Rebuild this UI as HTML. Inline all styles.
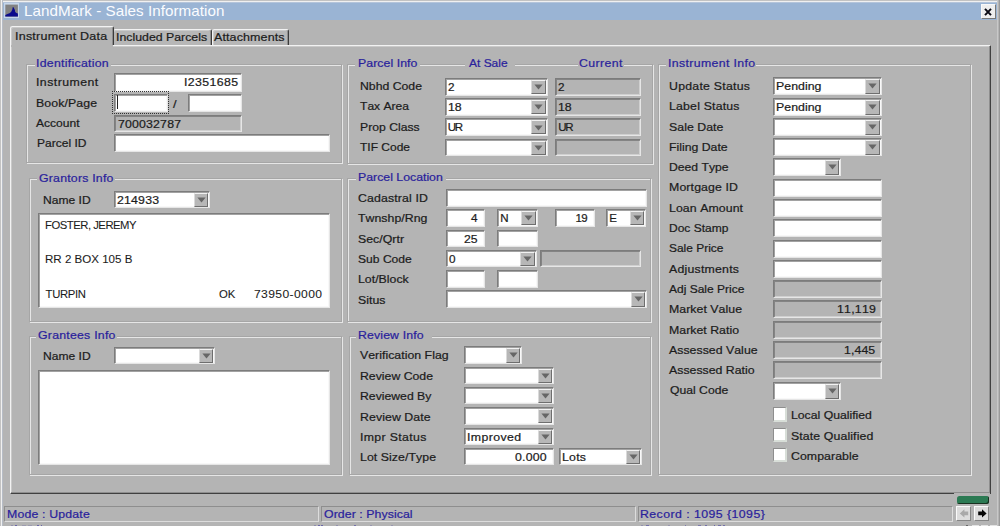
<!DOCTYPE html>
<html><head><meta charset="utf-8"><title>LandMark - Sales Information</title>
<style>
*{box-sizing:border-box;margin:0;padding:0}
html,body{width:1000px;height:526px;overflow:hidden;background:#b4b4b4}
body{position:relative;font-family:"Liberation Sans",sans-serif;font-size:12px}
#w{position:absolute;left:0;top:0;width:1000px;height:526px;overflow:hidden;background:#b4b4b4}
#bl{left:0;top:0;width:3px;height:526px;background:linear-gradient(90deg,#c2c2c2 0,#c2c2c2 1px,#f0f0f0 1px,#f0f0f0 2px,#b6bcc6 2px)}
#bt{left:0;top:0;width:998px;height:3px;background:linear-gradient(180deg,#c2c2c2 0,#c2c2c2 1px,#f0f0f0 1px,#f0f0f0 2px,#b4c4da 2px)}
#br{left:997px;top:0;width:3px;height:526px;background:linear-gradient(90deg,#c8c8c8 0,#c8c8c8 1px,#b4b4b4 1px,#b4b4b4 1.8px,#9a9a9a 1.8px)}
#w>*{position:absolute}
.t{font-kerning:none;-webkit-text-stroke:0.22px currentColor;transform-origin:0 0;white-space:pre;line-height:16px;height:16px;z-index:5}
#tb{left:3px;top:3px;width:994px;height:17px;background:#9ab4d4}
#ico{left:4px;top:3.2px}
#close{left:981px;top:4px;width:14.5px;height:14.5px;background:#eeeeee;border:1px solid;border-color:#f8f8f8 #787878 #787878 #f8f8f8}
#close svg{position:absolute;left:0.5px;top:2.6px}
#page{left:10px;top:45px;width:981px;height:449px;border:1px solid;border-color:#f2f2f2 #404040 #404040 #f2f2f2;
 box-shadow:inset -1px -1px 0 #8e8e8e,inset 1px 1px 0 rgba(255,255,255,.28)}
.tab{background:#b7b7b7;border:1px solid;border-color:#f2f2f2 #3c3c3c #b4b4b4 #f2f2f2;border-bottom:none;border-radius:2.5px 2.5px 0 0;box-shadow:inset 1px 1px 0 rgba(255,255,255,.28),inset -1px 0 0 rgba(90,90,90,.45)}
.tab.sel{z-index:2;background:#b4b4b4}
#tcov{left:11px;top:45px;width:101.5px;height:2px;background:#b4b4b4;z-index:3}
.g{border:1px solid #a6a6a6;box-shadow:inset 1px 1px 0 #e6e6e6, 1px 1px 0 #e6e6e6}
.gl{height:6px;background:#b4b4b4}
.f{background:#fff;border:1px solid;border-color:#7c7c7c #e6e6e6 #e6e6e6 #7c7c7c;box-shadow:inset 1px 1px 0 rgba(100,100,100,.6),inset -1px -1px 0 rgba(240,240,240,.45)}
.f.ro{background:#b4b4b4}
.cb{width:14.5px;background:#b7b7b7;border:1px solid;border-color:#f2f2f2 #6e6e6e #6e6e6e #dadada}
.cb svg{position:absolute;left:2.1px;top:3.4px}
.ck{width:14.5px;height:14.5px;background:#fff;border:solid;border-width:1.5px 2px 2px 1.5px;border-color:#8e8e8e #d8ded8 #d8ded8 #8e8e8e}
.tip{top:524.7px;height:2px;background:#3a34a0}
.sp{border:1px solid;border-color:#8e8e8e #dcdcdc #dcdcdc #8e8e8e}
#focus{left:112px;top:91px;width:57px;height:23px;border:1px dotted #333}
#caret{left:117px;top:95px;width:1px;height:14px;background:#222}
#green{left:957px;top:496px;width:32px;height:8px;background:#2b7a53;border-radius:2.5px;box-shadow:inset -1px -1px 0 #17301f}
#gcov{left:953.5px;top:493px;width:36.5px;height:2px;background:#b4b4b4}
.nb{top:506px;width:15px;height:15px;background:#dcdcdc;border:1px solid;border-color:#fafafa #858585 #858585 #fafafa}
.nb svg{position:absolute;left:1.5px;top:2px}
</style></head>
<body><div id="w">
<div id="bt"></div><div id="bl"></div><div id="br"></div><div id="tb"></div>
<svg id="ico" width="16" height="16" viewBox="0 0 16 16"><rect x="0" y="0" width="15" height="15" fill="#c6d6ea"/>
<rect x="1.3" y="1.6" width="12.6" height="12" fill="#828282"/>
<path d="M1.3 13.6 L1.3 11.9 L3.5 10.9 L6 9.9 L7.4 8.6 L8.4 6.2 L8.7 4.3 L9.2 3.9 L9.9 4.9 L10.9 7 L11.2 8.9 L12.4 10 L13.9 10.4 L13.9 13.6 Z" fill="#0a0a8c"/></svg>
<span class="t" style="left:23.60px;top:3.20px;color:#fbfcff;font-size:14.2px;letter-spacing:0.045px;transform:scaleX(1.0700);-webkit-text-stroke:0;">LandMark - Sales Information</span>
<div id="close"><svg width="10" height="8" viewBox="0 0 10 8"><path d="M2 0.9 L8 7.1 M8 0.9 L2 7.1" stroke="#0a0a14" stroke-width="2"/></svg></div>
<div id="page"></div>
<div class="tab sel" style="left:10px;top:26px;width:104px;height:19px"></div>
<div id="tcov"></div>
<div class="tab" style="left:113px;top:29px;width:99px;height:16px;border-left:none"></div>
<div class="tab" style="left:212px;top:29px;width:77px;height:16px"></div>
<span class="t" style="left:15.00px;top:28.20px;color:#1c1c1c;font-size:11.7px;letter-spacing:0.215px;transform:scaleX(1.0700);">Instrument Data</span>
<span class="t" style="left:116.40px;top:28.50px;color:#1c1c1c;font-size:11.7px;letter-spacing:0.000px;transform:scaleX(1.0543);">Included Parcels</span>
<span class="t" style="left:214.40px;top:28.50px;color:#1c1c1c;font-size:11.7px;letter-spacing:0.095px;transform:scaleX(1.0700);">Attachments</span>
<div class="g" style="left:26px;top:64px;width:316px;height:99px"></div>
<div class="gl" style="left:35px;top:62px;width:75.5px"></div>
<span class="t" style="left:36.30px;top:55.00px;color:#2a1f9c;font-size:11.5px;letter-spacing:0.260px;transform:scaleX(1.0700);">Identification</span>
<span class="t" style="left:36.30px;top:74.00px;color:#1c1c1c;font-size:11.5px;letter-spacing:0.422px;transform:scaleX(1.0700);">Instrument</span>
<div class="f" style="left:114px;top:73px;width:128px;height:18.5px"></div>
<span class="t" style="left:183.70px;top:74.00px;color:#1c1c1c;font-size:11.5px;letter-spacing:0.358px;transform:scaleX(1.0700);">I2351685</span>
<span class="t" style="left:36.00px;top:95.00px;color:#1c1c1c;font-size:11.5px;letter-spacing:0.093px;transform:scaleX(1.0700);">Book/Page</span>
<div class="f" style="left:114px;top:94px;width:54px;height:17.5px"></div>
<div class="f" style="left:188px;top:94px;width:54px;height:17.5px"></div>
<div id="focus"></div><div id="caret"></div>
<span class="t" style="left:173.00px;top:96.00px;color:#1c1c1c;font-size:11.5px;letter-spacing:0.000px;transform:scaleX(1.1200);">/</span>
<span class="t" style="left:36.00px;top:115.00px;color:#1c1c1c;font-size:11.5px;letter-spacing:0.000px;transform:scaleX(1.0492);">Account</span>
<div class="f ro" style="left:114px;top:115px;width:128px;height:17px"></div>
<span class="t" style="left:117.75px;top:116.00px;color:#1c1c1c;font-size:11.5px;letter-spacing:0.165px;transform:scaleX(1.0700);">700032787</span>
<span class="t" style="left:37.00px;top:135.00px;color:#1c1c1c;font-size:11.5px;letter-spacing:0.000px;transform:scaleX(1.0446);">Parcel ID</span>
<div class="f" style="left:114px;top:134.4px;width:216px;height:17.599999999999994px"></div>
<div class="g" style="left:29px;top:178px;width:313px;height:144px"></div>
<div class="gl" style="left:37px;top:176px;width:78px"></div>
<span class="t" style="left:39.00px;top:170.20px;color:#2a1f9c;font-size:11.5px;letter-spacing:0.202px;transform:scaleX(1.0700);">Grantors Info</span>
<span class="t" style="left:42.60px;top:192.00px;color:#1c1c1c;font-size:11.5px;letter-spacing:0.000px;transform:scaleX(1.0492);">Name ID</span>
<div class="f" style="left:114px;top:191px;width:96px;height:17px"></div>
<span class="t" style="left:117.20px;top:192.00px;color:#1c1c1c;font-size:11.5px;letter-spacing:0.176px;transform:scaleX(1.0700);">214933</span>
<div class="cb" style="left:193.5px;top:193px;height:13.5px"><svg width="9" height="6" viewBox="0 0 9 6"><path d="M0.4 0.5 L8.6 0.5 L4.5 5.6 Z" fill="#666"/></svg></div>
<div class="f" style="left:38px;top:213px;width:292px;height:95px"></div>
<span class="t" style="left:45.00px;top:217.00px;color:#1c1c1c;font-size:11.3px;letter-spacing:-0.488px;-webkit-text-stroke:0.08px currentColor;">FOSTER, JEREMY</span>
<span class="t" style="left:45.00px;top:251.00px;color:#1c1c1c;font-size:11.3px;letter-spacing:0.000px;transform:scaleX(1.0232);-webkit-text-stroke:0.08px currentColor;">RR 2 BOX 105 B</span>
<span class="t" style="left:45.60px;top:286.00px;color:#1c1c1c;font-size:11.3px;letter-spacing:-0.332px;-webkit-text-stroke:0.08px currentColor;">TURPIN</span>
<span class="t" style="left:218.80px;top:286.00px;color:#1c1c1c;font-size:11.3px;letter-spacing:0.000px;transform:scaleX(1.0045);-webkit-text-stroke:0.08px currentColor;">OK</span>
<span class="t" style="left:254.00px;top:286.00px;color:#1c1c1c;font-size:11.3px;letter-spacing:0.359px;transform:scaleX(1.0700);-webkit-text-stroke:0.08px currentColor;">73950-0000</span>
<div class="g" style="left:29px;top:336px;width:313px;height:139px"></div>
<div class="gl" style="left:36px;top:334px;width:81px"></div>
<span class="t" style="left:38.00px;top:327.00px;color:#2a1f9c;font-size:11.5px;letter-spacing:0.222px;transform:scaleX(1.0700);">Grantees Info</span>
<span class="t" style="left:42.60px;top:348.00px;color:#1c1c1c;font-size:11.5px;letter-spacing:0.000px;transform:scaleX(1.0492);">Name ID</span>
<div class="f" style="left:114px;top:347px;width:101px;height:17px"></div>
<div class="cb" style="left:198.5px;top:349px;height:13.5px"><svg width="9" height="6" viewBox="0 0 9 6"><path d="M0.4 0.5 L8.6 0.5 L4.5 5.6 Z" fill="#666"/></svg></div>
<div class="f" style="left:38px;top:370px;width:292px;height:94.5px"></div>
<div class="g" style="left:347px;top:64px;width:306px;height:100px"></div>
<div class="gl" style="left:355px;top:62px;width:65px"></div>
<span class="t" style="left:357.60px;top:55.00px;color:#2a1f9c;font-size:11.5px;letter-spacing:0.054px;transform:scaleX(1.0700);">Parcel Info</span>
<div class="gl" style="left:465px;top:62px;width:50px"></div>
<span class="t" style="left:469.00px;top:55.00px;color:#2a1f9c;font-size:11.5px;letter-spacing:0.000px;transform:scaleX(1.0411);">At Sale</span>
<div class="gl" style="left:577.5px;top:62px;width:46.0px"></div>
<span class="t" style="left:579.00px;top:55.00px;color:#2a1f9c;font-size:11.5px;letter-spacing:0.353px;transform:scaleX(1.0700);">Current</span>
<span class="t" style="left:360.00px;top:78.40px;color:#1c1c1c;font-size:11.5px;letter-spacing:0.000px;transform:scaleX(1.0657);">Nbhd Code</span>
<div class="f" style="left:444.5px;top:78px;width:103.0px;height:17.5px"></div>
<span class="t" style="left:447.70px;top:79.00px;color:#1c1c1c;font-size:11.5px;letter-spacing:0.000px;transform:scaleX(1.0205);">2</span>
<div class="cb" style="left:531.0px;top:80px;height:14.0px"><svg width="9" height="6" viewBox="0 0 9 6"><path d="M0.4 0.5 L8.6 0.5 L4.5 5.6 Z" fill="#666"/></svg></div>
<div class="f ro" style="left:555px;top:78px;width:86px;height:17.5px"></div>
<span class="t" style="left:558.20px;top:79.00px;color:#1c1c1c;font-size:11.5px;letter-spacing:0.000px;transform:scaleX(1.0205);">2</span>
<span class="t" style="left:360.00px;top:98.40px;color:#1c1c1c;font-size:11.5px;letter-spacing:0.000px;transform:scaleX(1.0500);">Tax Area</span>
<div class="f" style="left:444.5px;top:98px;width:103.0px;height:17.5px"></div>
<span class="t" style="left:447.70px;top:99.00px;color:#1c1c1c;font-size:11.5px;letter-spacing:0.014px;transform:scaleX(1.0700);">18</span>
<div class="cb" style="left:531.0px;top:100px;height:14.0px"><svg width="9" height="6" viewBox="0 0 9 6"><path d="M0.4 0.5 L8.6 0.5 L4.5 5.6 Z" fill="#666"/></svg></div>
<div class="f ro" style="left:555px;top:98px;width:86px;height:17.5px"></div>
<span class="t" style="left:558.20px;top:99.00px;color:#1c1c1c;font-size:11.5px;letter-spacing:0.014px;transform:scaleX(1.0700);">18</span>
<span class="t" style="left:360.00px;top:118.80px;color:#1c1c1c;font-size:11.5px;letter-spacing:0.000px;transform:scaleX(1.0597);">Prop Class</span>
<div class="f" style="left:444.5px;top:118.4px;width:103.0px;height:17.5px"></div>
<span class="t" style="left:447.70px;top:119.40px;color:#1c1c1c;font-size:11.5px;letter-spacing:-1.308px;">UR</span>
<div class="cb" style="left:531.0px;top:120.4px;height:14.0px"><svg width="9" height="6" viewBox="0 0 9 6"><path d="M0.4 0.5 L8.6 0.5 L4.5 5.6 Z" fill="#666"/></svg></div>
<div class="f ro" style="left:555px;top:118.4px;width:86px;height:17.5px"></div>
<span class="t" style="left:558.20px;top:119.40px;color:#1c1c1c;font-size:11.5px;letter-spacing:-1.308px;">UR</span>
<span class="t" style="left:360.00px;top:139.00px;color:#1c1c1c;font-size:11.5px;letter-spacing:0.000px;transform:scaleX(1.0432);">TIF Code</span>
<div class="f" style="left:444.5px;top:138.6px;width:103.0px;height:17.5px"></div>
<div class="cb" style="left:531.0px;top:140.6px;height:14.0px"><svg width="9" height="6" viewBox="0 0 9 6"><path d="M0.4 0.5 L8.6 0.5 L4.5 5.6 Z" fill="#666"/></svg></div>
<div class="f ro" style="left:555px;top:138.6px;width:86px;height:17.5px"></div>
<div class="g" style="left:347px;top:178px;width:304px;height:144px"></div>
<div class="gl" style="left:355.5px;top:176px;width:90.5px"></div>
<span class="t" style="left:357.60px;top:169.00px;color:#2a1f9c;font-size:11.5px;letter-spacing:0.000px;transform:scaleX(1.0698);">Parcel Location</span>
<span class="t" style="left:357.60px;top:190.00px;color:#1c1c1c;font-size:11.5px;letter-spacing:0.137px;transform:scaleX(1.0700);">Cadastral ID</span>
<div class="f" style="left:446px;top:189px;width:200.5px;height:17.5px"></div>
<span class="t" style="left:357.60px;top:210.00px;color:#1c1c1c;font-size:11.5px;letter-spacing:0.034px;transform:scaleX(1.0700);">Twnshp/Rng</span>
<div class="f" style="left:446px;top:209px;width:38.5px;height:17.5px"></div>
<span class="t" style="left:471.18px;top:210.00px;color:#1c1c1c;font-size:11.5px;letter-spacing:0.000px;transform:scaleX(1.0205);">4</span>
<div class="f" style="left:497px;top:209px;width:40.5px;height:17.5px"></div>
<span class="t" style="left:500.20px;top:210.00px;color:#1c1c1c;font-size:11.5px;letter-spacing:0.000px;">N</span>
<div class="cb" style="left:521.0px;top:211px;height:14.0px"><svg width="9" height="6" viewBox="0 0 9 6"><path d="M0.4 0.5 L8.6 0.5 L4.5 5.6 Z" fill="#666"/></svg></div>
<div class="f" style="left:555px;top:209px;width:39.5px;height:17.5px"></div>
<span class="t" style="left:575.60px;top:210.00px;color:#1c1c1c;font-size:11.5px;letter-spacing:-0.690px;">19</span>
<div class="f" style="left:606px;top:209px;width:40px;height:17.5px"></div>
<span class="t" style="left:609.20px;top:210.00px;color:#1c1c1c;font-size:11.5px;letter-spacing:0.000px;">E</span>
<div class="cb" style="left:629.5px;top:211px;height:14.0px"><svg width="9" height="6" viewBox="0 0 9 6"><path d="M0.4 0.5 L8.6 0.5 L4.5 5.6 Z" fill="#666"/></svg></div>
<span class="t" style="left:357.60px;top:230.50px;color:#1c1c1c;font-size:11.5px;letter-spacing:0.026px;transform:scaleX(1.0700);">Sec/Qrtr</span>
<div class="f" style="left:446px;top:230px;width:38.5px;height:17px"></div>
<span class="t" style="left:464.10px;top:231.00px;color:#1c1c1c;font-size:11.5px;letter-spacing:0.000px;transform:scaleX(1.0633);">25</span>
<div class="f" style="left:497px;top:230px;width:40.5px;height:17px"></div>
<span class="t" style="left:357.60px;top:250.50px;color:#1c1c1c;font-size:11.5px;letter-spacing:0.000px;transform:scaleX(1.0519);">Sub Code</span>
<div class="f" style="left:446px;top:250px;width:90.5px;height:17px"></div>
<span class="t" style="left:449.20px;top:251.00px;color:#1c1c1c;font-size:11.5px;letter-spacing:0.000px;transform:scaleX(1.0205);">0</span>
<div class="cb" style="left:520.0px;top:252px;height:13.5px"><svg width="9" height="6" viewBox="0 0 9 6"><path d="M0.4 0.5 L8.6 0.5 L4.5 5.6 Z" fill="#666"/></svg></div>
<div class="f ro" style="left:540px;top:250px;width:101px;height:17px"></div>
<span class="t" style="left:357.60px;top:271.00px;color:#1c1c1c;font-size:11.5px;letter-spacing:0.019px;transform:scaleX(1.0700);">Lot/Block</span>
<div class="f" style="left:446px;top:270px;width:38.5px;height:17.5px"></div>
<div class="f" style="left:497px;top:270px;width:40.5px;height:17.5px"></div>
<span class="t" style="left:357.60px;top:291.60px;color:#1c1c1c;font-size:11.5px;letter-spacing:0.010px;transform:scaleX(1.0700);">Situs</span>
<div class="f" style="left:446px;top:290px;width:201px;height:18px"></div>
<div class="cb" style="left:630.5px;top:292px;height:14.5px"><svg width="9" height="6" viewBox="0 0 9 6"><path d="M0.4 0.5 L8.6 0.5 L4.5 5.6 Z" fill="#666"/></svg></div>
<div class="g" style="left:349px;top:336px;width:302px;height:139px"></div>
<div class="gl" style="left:356px;top:334px;width:76px"></div>
<span class="t" style="left:358.40px;top:327.00px;color:#2a1f9c;font-size:11.5px;letter-spacing:0.123px;transform:scaleX(1.0700);">Review Info</span>
<span class="t" style="left:360.00px;top:347.40px;color:#1c1c1c;font-size:11.5px;letter-spacing:0.022px;transform:scaleX(1.0700);">Verification Flag</span>
<div class="f" style="left:463.5px;top:346px;width:58.5px;height:18px"></div>
<div class="cb" style="left:505.5px;top:348px;height:14.5px"><svg width="9" height="6" viewBox="0 0 9 6"><path d="M0.4 0.5 L8.6 0.5 L4.5 5.6 Z" fill="#666"/></svg></div>
<span class="t" style="left:360.00px;top:368.00px;color:#1c1c1c;font-size:11.5px;letter-spacing:0.000px;transform:scaleX(1.0674);">Review Code</span>
<div class="f" style="left:463.5px;top:367px;width:90.5px;height:17.399999999999977px"></div>
<div class="cb" style="left:537.5px;top:369px;height:13.899999999999977px"><svg width="9" height="6" viewBox="0 0 9 6"><path d="M0.4 0.5 L8.6 0.5 L4.5 5.6 Z" fill="#666"/></svg></div>
<span class="t" style="left:360.00px;top:388.00px;color:#1c1c1c;font-size:11.5px;letter-spacing:0.000px;transform:scaleX(1.0639);">Reviewed By</span>
<div class="f" style="left:463.5px;top:387px;width:90.5px;height:17.399999999999977px"></div>
<div class="cb" style="left:537.5px;top:389px;height:13.899999999999977px"><svg width="9" height="6" viewBox="0 0 9 6"><path d="M0.4 0.5 L8.6 0.5 L4.5 5.6 Z" fill="#666"/></svg></div>
<span class="t" style="left:360.00px;top:408.50px;color:#1c1c1c;font-size:11.5px;letter-spacing:0.079px;transform:scaleX(1.0700);">Review Date</span>
<div class="f" style="left:463.5px;top:407px;width:90.5px;height:17.600000000000023px"></div>
<div class="cb" style="left:537.5px;top:409px;height:14.100000000000023px"><svg width="9" height="6" viewBox="0 0 9 6"><path d="M0.4 0.5 L8.6 0.5 L4.5 5.6 Z" fill="#666"/></svg></div>
<span class="t" style="left:360.00px;top:429.00px;color:#1c1c1c;font-size:11.5px;letter-spacing:0.326px;transform:scaleX(1.0700);">Impr Status</span>
<div class="f" style="left:463.5px;top:428px;width:90.5px;height:17.399999999999977px"></div>
<span class="t" style="left:466.70px;top:429.00px;color:#1c1c1c;font-size:11.5px;letter-spacing:0.388px;transform:scaleX(1.0700);">Improved</span>
<div class="cb" style="left:537.5px;top:430px;height:13.899999999999977px"><svg width="9" height="6" viewBox="0 0 9 6"><path d="M0.4 0.5 L8.6 0.5 L4.5 5.6 Z" fill="#666"/></svg></div>
<span class="t" style="left:360.00px;top:449.40px;color:#1c1c1c;font-size:11.5px;letter-spacing:0.060px;transform:scaleX(1.0700);">Lot Size/Type</span>
<div class="f" style="left:463.5px;top:448px;width:90.5px;height:17.399999999999977px"></div>
<span class="t" style="left:514.90px;top:449.00px;color:#1c1c1c;font-size:11.5px;letter-spacing:0.189px;transform:scaleX(1.0700);">0.000</span>
<div class="f" style="left:559px;top:448px;width:83px;height:17.399999999999977px"></div>
<span class="t" style="left:562.20px;top:449.00px;color:#1c1c1c;font-size:11.5px;letter-spacing:0.231px;transform:scaleX(1.0700);">Lots</span>
<div class="cb" style="left:625.5px;top:450px;height:13.899999999999977px"><svg width="9" height="6" viewBox="0 0 9 6"><path d="M0.4 0.5 L8.6 0.5 L4.5 5.6 Z" fill="#666"/></svg></div>
<div class="g" style="left:658px;top:64px;width:313px;height:411px"></div>
<div class="gl" style="left:665.5px;top:62px;width:90.5px"></div>
<span class="t" style="left:668.00px;top:55.00px;color:#2a1f9c;font-size:11.5px;letter-spacing:0.329px;transform:scaleX(1.0700);">Instrument Info</span>
<span class="t" style="left:669.00px;top:77.90px;color:#1c1c1c;font-size:11.5px;letter-spacing:0.235px;transform:scaleX(1.0700);">Update Status</span>
<div class="f" style="left:772.5px;top:77px;width:109.0px;height:18px"></div>
<span class="t" style="left:775.70px;top:78.00px;color:#1c1c1c;font-size:11.5px;letter-spacing:0.038px;transform:scaleX(1.0700);">Pending</span>
<div class="cb" style="left:865.0px;top:79px;height:14.5px"><svg width="9" height="6" viewBox="0 0 9 6"><path d="M0.4 0.5 L8.6 0.5 L4.5 5.6 Z" fill="#666"/></svg></div>
<span class="t" style="left:669.00px;top:98.20px;color:#1c1c1c;font-size:11.5px;letter-spacing:0.178px;transform:scaleX(1.0700);">Label Status</span>
<div class="f" style="left:772.5px;top:98px;width:109.0px;height:18px"></div>
<span class="t" style="left:775.70px;top:99.00px;color:#1c1c1c;font-size:11.5px;letter-spacing:0.038px;transform:scaleX(1.0700);">Pending</span>
<div class="cb" style="left:865.0px;top:100px;height:14.5px"><svg width="9" height="6" viewBox="0 0 9 6"><path d="M0.4 0.5 L8.6 0.5 L4.5 5.6 Z" fill="#666"/></svg></div>
<span class="t" style="left:669.00px;top:118.50px;color:#1c1c1c;font-size:11.5px;letter-spacing:0.042px;transform:scaleX(1.0700);">Sale Date</span>
<div class="f" style="left:772.5px;top:118px;width:109.0px;height:18px"></div>
<div class="cb" style="left:865.0px;top:120px;height:14.5px"><svg width="9" height="6" viewBox="0 0 9 6"><path d="M0.4 0.5 L8.6 0.5 L4.5 5.6 Z" fill="#666"/></svg></div>
<span class="t" style="left:669.00px;top:138.80px;color:#1c1c1c;font-size:11.5px;letter-spacing:0.000px;transform:scaleX(1.0661);">Filing Date</span>
<div class="f" style="left:772.5px;top:138px;width:109.0px;height:18px"></div>
<div class="cb" style="left:865.0px;top:140px;height:14.5px"><svg width="9" height="6" viewBox="0 0 9 6"><path d="M0.4 0.5 L8.6 0.5 L4.5 5.6 Z" fill="#666"/></svg></div>
<span class="t" style="left:669.00px;top:159.10px;color:#1c1c1c;font-size:11.5px;letter-spacing:0.000px;transform:scaleX(1.0595);">Deed Type</span>
<div class="f" style="left:772.5px;top:158px;width:68.5px;height:18px"></div>
<div class="cb" style="left:824.5px;top:160px;height:14.5px"><svg width="9" height="6" viewBox="0 0 9 6"><path d="M0.4 0.5 L8.6 0.5 L4.5 5.6 Z" fill="#666"/></svg></div>
<span class="t" style="left:669.00px;top:179.40px;color:#1c1c1c;font-size:11.5px;letter-spacing:0.121px;transform:scaleX(1.0700);">Mortgage ID</span>
<div class="f" style="left:772.5px;top:179px;width:109.0px;height:18px"></div>
<span class="t" style="left:669.00px;top:199.70px;color:#1c1c1c;font-size:11.5px;letter-spacing:0.075px;transform:scaleX(1.0700);">Loan Amount</span>
<div class="f" style="left:772.5px;top:199px;width:109.0px;height:18px"></div>
<span class="t" style="left:669.00px;top:220.00px;color:#1c1c1c;font-size:11.5px;letter-spacing:0.000px;transform:scaleX(1.0443);">Doc Stamp</span>
<div class="f" style="left:772.5px;top:219px;width:109.0px;height:18px"></div>
<span class="t" style="left:669.00px;top:240.30px;color:#1c1c1c;font-size:11.5px;letter-spacing:0.000px;transform:scaleX(1.0379);">Sale Price</span>
<div class="f" style="left:772.5px;top:240px;width:109.0px;height:18px"></div>
<span class="t" style="left:669.00px;top:260.60px;color:#1c1c1c;font-size:11.5px;letter-spacing:0.214px;transform:scaleX(1.0700);">Adjustments</span>
<div class="f" style="left:772.5px;top:260px;width:109.0px;height:18px"></div>
<span class="t" style="left:669.00px;top:280.90px;color:#1c1c1c;font-size:11.5px;letter-spacing:0.000px;transform:scaleX(1.0439);">Adj Sale Price</span>
<div class="f ro" style="left:772.5px;top:280px;width:109.0px;height:18px"></div>
<span class="t" style="left:669.00px;top:301.20px;color:#1c1c1c;font-size:11.5px;letter-spacing:0.043px;transform:scaleX(1.0700);">Market Value</span>
<div class="f ro" style="left:772.5px;top:300px;width:109.0px;height:18px"></div>
<span class="t" style="left:836.70px;top:301.00px;color:#1c1c1c;font-size:11.5px;letter-spacing:0.218px;transform:scaleX(1.0700);">11,119</span>
<span class="t" style="left:669.00px;top:321.50px;color:#1c1c1c;font-size:11.5px;letter-spacing:0.021px;transform:scaleX(1.0700);">Market Ratio</span>
<div class="f ro" style="left:772.5px;top:321px;width:109.0px;height:18px"></div>
<span class="t" style="left:669.00px;top:341.80px;color:#1c1c1c;font-size:11.5px;letter-spacing:0.026px;transform:scaleX(1.0700);">Assessed Value</span>
<div class="f ro" style="left:772.5px;top:341px;width:109.0px;height:18px"></div>
<span class="t" style="left:844.30px;top:342.00px;color:#1c1c1c;font-size:11.5px;letter-spacing:0.096px;transform:scaleX(1.0700);">1,445</span>
<span class="t" style="left:669.00px;top:362.10px;color:#1c1c1c;font-size:11.5px;letter-spacing:0.008px;transform:scaleX(1.0700);">Assessed Ratio</span>
<div class="f ro" style="left:772.5px;top:361px;width:109.0px;height:18px"></div>
<span class="t" style="left:670.40px;top:382.40px;color:#1c1c1c;font-size:11.5px;letter-spacing:0.000px;transform:scaleX(1.0586);">Qual Code</span>
<div class="f" style="left:772.5px;top:382px;width:68.5px;height:18px"></div>
<div class="cb" style="left:824.5px;top:384px;height:14.5px"><svg width="9" height="6" viewBox="0 0 9 6"><path d="M0.4 0.5 L8.6 0.5 L4.5 5.6 Z" fill="#666"/></svg></div>
<div class="ck" style="left:772.5px;top:407px"></div>
<span class="t" style="left:790.60px;top:407.40px;color:#1c1c1c;font-size:11.5px;letter-spacing:0.000px;transform:scaleX(1.0634);">Local Qualified</span>
<div class="ck" style="left:772.5px;top:427.5px"></div>
<span class="t" style="left:790.60px;top:427.90px;color:#1c1c1c;font-size:11.5px;letter-spacing:0.106px;transform:scaleX(1.0700);">State Qualified</span>
<div class="ck" style="left:772.5px;top:447.5px"></div>
<span class="t" style="left:790.60px;top:447.90px;color:#1c1c1c;font-size:11.5px;letter-spacing:0.059px;transform:scaleX(1.0700);">Comparable</span>
<div class="sp" style="left:4px;top:506px;width:314.5px;height:15.5px"></div>
<div class="sp" style="left:321px;top:506px;width:314.5px;height:15.5px"></div>
<div class="sp" style="left:638px;top:506px;width:314.5px;height:15.5px"></div>
<span class="t" style="left:7.20px;top:506.00px;color:#2a1f9c;font-size:11.5px;letter-spacing:0.162px;transform:scaleX(1.0700);">Mode : Update</span>
<span class="t" style="left:324.40px;top:505.80px;color:#2a1f9c;font-size:11.5px;letter-spacing:0.067px;transform:scaleX(1.0700);">Order : Physical</span>
<span class="t" style="left:640.00px;top:505.80px;color:#2a1f9c;font-size:11.5px;letter-spacing:0.418px;transform:scaleX(1.0700);">Record : 1095 {1095}</span>
<div id="gcov"></div><div id="green"></div>
<div class="nb" style="left:956px"><svg width="10" height="9" viewBox="0 0 10 9"><path d="M0.8 4.4 L5.4 0.2 L5.4 2.6 L9.2 2.6 L9.2 6.2 L5.4 6.2 L5.4 8.6 Z" fill="#a9a9a9"/></svg></div>
<div class="nb" style="left:974px"><svg width="10" height="9" viewBox="0 0 10 9"><path d="M9.6 4.4 L5 0.2 L5 2.6 L1.2 2.6 L1.2 6.2 L5 6.2 L5 8.6 Z" fill="#050505"/></svg></div>
<div class="tip" style="left:11px;width:1.5px;opacity:0.26"></div>
<div class="tip" style="left:15px;width:1.5px;opacity:0.60"></div>
<div class="tip" style="left:37px;width:1.5px;opacity:0.60"></div>
<div class="tip" style="left:40.5px;width:1.5px;opacity:0.60"></div>
<div class="tip" style="left:22px;width:4px;opacity:0.19"></div>
<div class="tip" style="left:28px;width:4px;opacity:0.19"></div>
<div class="tip" style="left:314px;width:1.5px;opacity:0.30"></div>
<div class="tip" style="left:318px;width:1.5px;opacity:0.60"></div>
<div class="tip" style="left:321px;width:1.5px;opacity:0.60"></div>
<div class="tip" style="left:336px;width:2px;opacity:0.26"></div>
<div class="tip" style="left:354px;width:1.5px;opacity:0.52"></div>
<div class="tip" style="left:370px;width:2px;opacity:0.22"></div>
<div class="tip" style="left:391px;width:2px;opacity:0.22"></div>
<div class="tip" style="left:641px;width:1.5px;opacity:0.26"></div>
<div class="tip" style="left:646px;width:2.5px;opacity:0.52"></div>
<div class="tip" style="left:668px;width:2px;opacity:0.22"></div>
<div class="tip" style="left:684.5px;width:1.5px;opacity:0.45"></div>
<div class="tip" style="left:698px;width:3px;opacity:0.45"></div>
<div class="tip" style="left:704.5px;width:2px;opacity:0.52"></div>
<div class="tip" style="left:713.5px;width:1.5px;opacity:0.60"></div>
<div class="tip" style="left:718px;width:2.5px;opacity:0.52"></div>
<div class="tip" style="left:723px;width:1.5px;opacity:0.52"></div>
<div class="tip" style="left:966px;width:1.5px;top:524.6px;background:#333;opacity:.6"></div>
<div class="tip" style="left:972px;width:7px;top:525px;height:1px;background:#f4f4f4;opacity:.75"></div>
<div class="tip" style="left:981px;width:7px;top:525px;height:1px;background:#f4f4f4;opacity:.75"></div>
<div class="tip" style="left:990px;width:7px;top:525px;height:1px;background:#f4f4f4;opacity:.75"></div>
</div></body></html>
